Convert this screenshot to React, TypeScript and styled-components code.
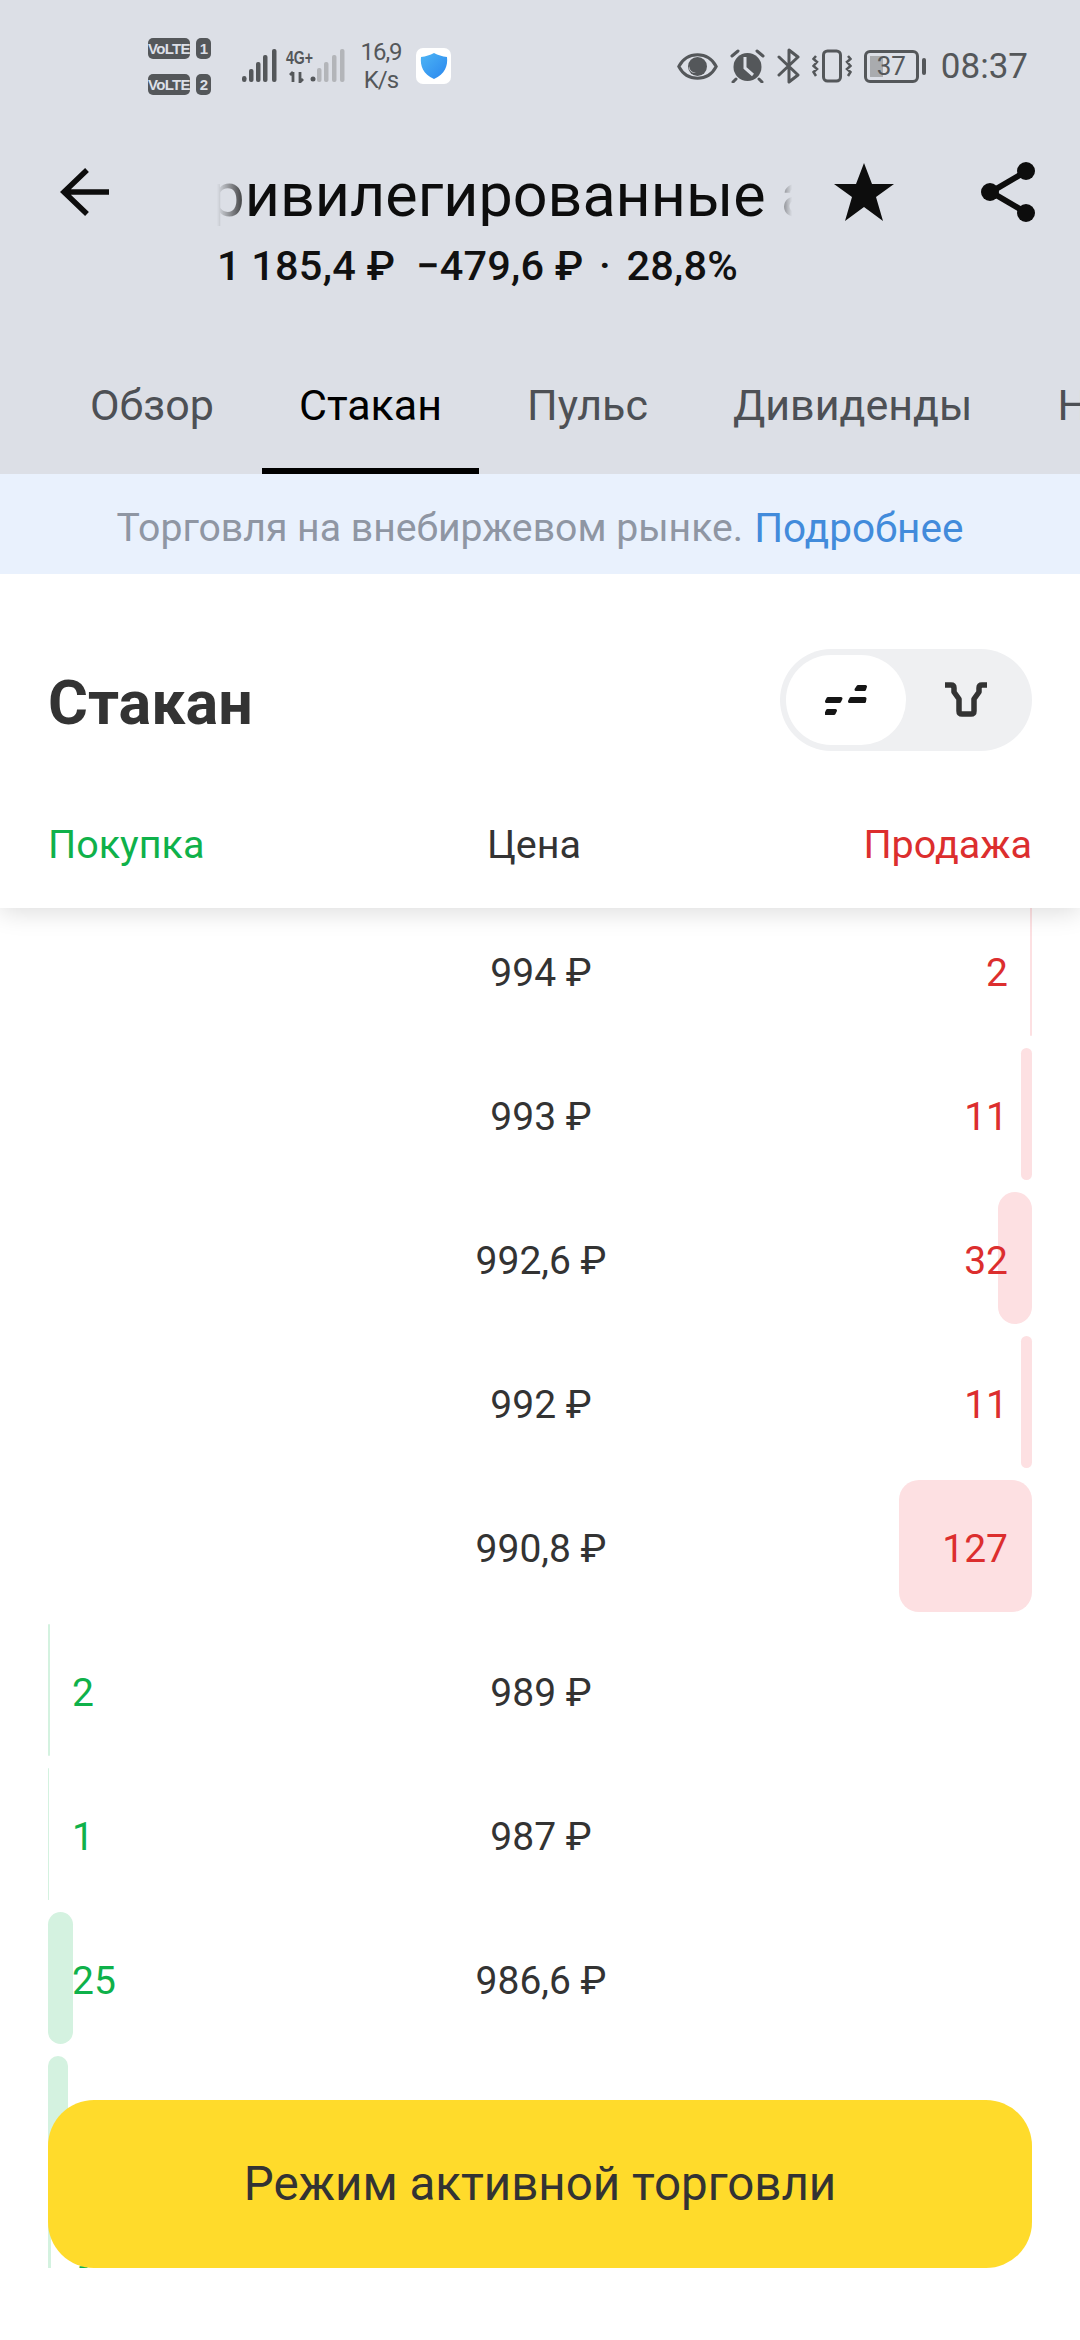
import React from 'react';
import styled, { createGlobalStyle } from 'styled-components';

const GlobalStyle = createGlobalStyle`
  html, body {
    margin: 0;
    padding: 0;
    background: #fff;
    font-family: Roboto, "Liberation Sans", sans-serif;
  }
  * { box-sizing: border-box; }
`;

const Screen = styled.div`
  position: relative;
  width: 1080px;
  height: 2340px;
  overflow: hidden;
  background: #fff;
  display: flex;
  flex-direction: column;
`;

const Top = styled.header`
  background: #dcdfe6;
  height: 474px;
  display: flex;
  flex-direction: column;
  flex-shrink: 0;
`;

const StatusBar = styled.div`
  height: 132px;
  padding: 0 52px 0 148px;
  display: flex;
  align-items: center;
  color: #54575a;
`;

const SimCol = styled.div`
  display: flex;
  flex-direction: column;
  gap: 15px;
  margin-right: 31px;
`;

const SimRow = styled.div`
  display: flex;
  gap: 6px;
`;

const Badge = styled.span<{ $w: number }>`
  width: ${p => p.$w}px;
  height: 21px;
  background: #54575a;
  color: #dcdfe6;
  border-radius: 5px;
  text-align: center;
  font: 700 15px/21px "Liberation Sans", sans-serif;
  letter-spacing: -0.7px;
  overflow: hidden;
`;

const Speed = styled.div`
  font-size: 24px;
  line-height: 28px;
  letter-spacing: -1px;
  text-align: center;
  margin: 0 13px 0 14px;
  width: 44px;
`;

const ShieldBox = styled.div`
  width: 35px;
  height: 36px;
  border-radius: 7px;
  background: #fff;
  display: flex;
  align-items: center;
  justify-content: center;
`;

const Spacer = styled.div`
  flex: 1;
`;

const StatusIcons = styled.div`
  display: flex;
  align-items: center;
  gap: 12px;
`;

const BatteryWrap = styled.div`
  display: flex;
  align-items: center;
  gap: 3px;
`;

const Battery = styled.div`
  position: relative;
  width: 55px;
  height: 33px;
  border: 3px solid #54575a;
  border-radius: 6px;
  font-size: 26px;
  line-height: 27px;
  text-align: center;
  &::before {
    content: '';
    position: absolute;
    left: 3px;
    top: 3px;
    bottom: 3px;
    width: 13px;
    background: #a9abae;
  }
`;

const BatteryDigits = styled.span`
  position: relative;
`;

const BatteryCap = styled.div`
  width: 4px;
  height: 17px;
  border-radius: 2px;
  background: #54575a;
`;

const Clock = styled.div`
  font-size: 35px;
  margin-left: 3px;
`;

const AppBar = styled.div`
  height: 132px;
  position: relative;
  display: flex;
  align-items: flex-start;
  padding: 0 32px 0 60px;
`;

const BackButton = styled.div`
  width: 49px;
  height: 48px;
  margin-top: 36px;
  flex-shrink: 0;
`;

const TitleBlock = styled.div`
  margin-left: 108px;
  width: 0;
  flex: 1;
  padding-top: 32px;
`;

const TitleClip = styled.div`
  width: 575px;
  height: 62px;
  overflow: hidden;
  white-space: nowrap;
  -webkit-mask-image: linear-gradient(90deg, transparent 0, #000 34px, #000 552px, transparent 575px);
  mask-image: linear-gradient(90deg, transparent 0, #000 34px, #000 552px, transparent 575px);
`;

const Title = styled.div`
  font-size: 61px;
  line-height: 62px;
  color: #0d0d0d;
  margin-left: -50px;
`;

const Quote = styled.div`
  font-size: 41.5px;
  font-weight: 500;
  line-height: 46px;
  letter-spacing: 0.2px;
  color: #111;
  margin-top: 17px;
  white-space: pre;
`;

const QuoteDot = styled.span`
  margin: 0 5px;
`;

const AppActions = styled.div`
  position: absolute;
  top: 30px;
  left: 834px;
  display: flex;
  gap: 87px;
  align-items: center;
`;

const Tabs = styled.nav`
  margin-top: auto;
  height: 104px;
  display: flex;
  gap: 11px;
  padding-left: 53px;
  overflow: hidden;
`;

const Tab = styled.div<{ $active?: boolean }>`
  flex-shrink: 0;
  height: 100%;
  padding: 0 37px;
  font-size: 43px;
  line-height: 70px;
  color: ${p => (p.$active ? '#000' : '#4d5055')};
  border-bottom: 6px solid ${p => (p.$active ? '#000' : 'transparent')};
`;

const Notice = styled.div`
  height: 100px;
  flex-shrink: 0;
  background: #e9f1fd;
  padding-top: 8px;
  display: flex;
  align-items: center;
  justify-content: center;
  font-size: 39.2px;
  color: #8f96a3;
  gap: 11px;
`;

const NoticeLink = styled.span`
  font-size: 40.5px;
  color: #428bdb;
`;

const Sticky = styled.div`
  position: relative;
  z-index: 1;
  height: 334px;
  flex-shrink: 0;
  padding: 0 48px;
  display: flex;
  flex-direction: column;
  background: #fff;
  box-shadow: 0 4px 24px rgba(0, 0, 0, 0.14);
  clip-path: inset(0 0 -60px 0);
`;

const Heading = styled.div`
  display: flex;
  align-items: center;
  justify-content: space-between;
  height: 102px;
  margin-top: 75px;
`;

const H1 = styled.h1`
  margin: 0;
  padding-top: 6px;
  font-size: 61px;
  font-weight: 700;
  color: #333;
`;

const Toggle = styled.div`
  width: 252px;
  height: 102px;
  border-radius: 51px;
  background: #eff0f2;
  padding: 6px;
  display: flex;
`;

const ToggleItem = styled.div<{ $on?: boolean }>`
  width: 120px;
  border-radius: 45px;
  background: ${p => (p.$on ? '#fff' : 'transparent')};
  display: flex;
  align-items: center;
  justify-content: center;
`;

const Columns = styled.div`
  display: grid;
  grid-template-columns: 1fr 1fr 1fr;
  margin-top: 72px;
  font-size: 39.5px;
  line-height: 44px;
`;

const ColHead = styled.div<{ $c: string; $a: string }>`
  color: ${p => p.$c};
  text-align: ${p => p.$a};
  padding-right: ${p => (p.$a === 'center' ? '12px' : '0')};
`;

const List = styled.div`
  height: 1364px;
  flex-shrink: 0;
  overflow: hidden;
  padding: 0 48px;
  display: flex;
  flex-direction: column;
  gap: 12px;
  margin-top: -4px;
`;

const Row = styled.div`
  position: relative;
  flex-shrink: 0;
  height: 132px;
  padding-top: 6px;
  display: grid;
  grid-template-columns: 1fr 1fr 1fr;
  align-items: center;
  font-size: 39px;
`;

const Fill = styled.div<{ $side: 'buy' | 'sell' }>`
  position: absolute;
  top: 0;
  bottom: 0;
  ${p => (p.$side === 'buy' ? 'left: 0;' : 'right: 0;')}
  border-radius: 20px;
  background: ${p => (p.$side === 'buy' ? '#d4f2e0' : '#fde0e2')};
`;

const Buy = styled.div`
  position: relative;
  color: #0fb14a;
  padding-left: 24px;
`;

const Price = styled.div`
  position: relative;
  color: #333;
  text-align: center;
  padding-left: 2px;
`;

const Sell = styled.div`
  position: relative;
  color: #dc2e2e;
  text-align: right;
  padding-right: 24px;
`;

const TradeButton = styled.button`
  position: absolute;
  left: 48px;
  top: 2100px;
  width: 984px;
  height: 168px;
  border: 0;
  border-radius: 46px;
  background: #ffdb2b;
  color: #333;
  font: 400 47.5px Roboto, "Liberation Sans", sans-serif;
`;

type Level = { price: string; buy?: string; sell?: string; width?: number };

const levels: Level[] = [
  { price: '994 ₽', sell: '2', width: 2 },
  { price: '993 ₽', sell: '11', width: 11 },
  { price: '992,6 ₽', sell: '32', width: 34 },
  { price: '992 ₽', sell: '11', width: 11 },
  { price: '990,8 ₽', sell: '127', width: 133 },
  { price: '989 ₽', buy: '2', width: 2 },
  { price: '987 ₽', buy: '1', width: 1 },
  { price: '986,6 ₽', buy: '25', width: 25 },
  { price: '986 ₽', buy: '20', width: 20 },
  { price: '985 ₽', buy: '3', width: 3 },
];

const tabs = [
  { label: 'Обзор', active: false },
  { label: 'Стакан', active: true },
  { label: 'Пульс', active: false },
  { label: 'Дивиденды', active: false },
  { label: 'Новости', active: false },
];

const ICON = '#54575a';
const BG = '#dcdfe6';

const NetworkIcons = () => (
  <svg width="103" height="34" viewBox="0 0 103 34">
    <g fill={ICON}>
      <rect x="0" y="27" width="4.500" height="6" rx="2.200" />
      <rect x="7" y="20" width="4.500" height="13" rx="2" />
      <rect x="14" y="13" width="4.500" height="20" rx="2" />
      <rect x="21" y="6" width="4.500" height="27" rx="2" />
      <rect x="30" y="0" width="4.500" height="33" rx="2" />
      <circle cx="71" cy="30" r="2.500" />
    </g>
    <text x="44" y="15" fontSize="18" fontWeight="700" fill={ICON} fontFamily="Liberation Sans" textLength="27" lengthAdjust="spacingAndGlyphs">4G+</text>
    <path d="M51 23v10M48 26l3-3M58 23v10l3-3" stroke={ICON} strokeWidth="2.800" fill="none" />
    <g fill="#b3b5b9">
      <rect x="75" y="19" width="4.500" height="14" rx="2" />
      <rect x="82" y="13" width="4.500" height="20" rx="2" />
      <rect x="90" y="6" width="4.500" height="27" rx="2" />
      <rect x="98" y="0" width="4.500" height="33" rx="2" />
    </g>
  </svg>
);

export default function App() {
  return (
    <Screen>
      <GlobalStyle />
      <Top>
        <StatusBar>
          <SimCol>
            <SimRow><Badge $w={42}>VoLTE</Badge><Badge $w={15}>1</Badge></SimRow>
            <SimRow><Badge $w={42}>VoLTE</Badge><Badge $w={15}>2</Badge></SimRow>
          </SimCol>
          <NetworkIcons />
          <Speed>16,9<br />K/s</Speed>
          <ShieldBox>
            <svg width="30" height="28" viewBox="0 0 30 28">
              <defs>
                <linearGradient id="shield" x1="0" y1="0" x2="1" y2="1">
                  <stop offset="0" stopColor="#4db5f5" />
                  <stop offset="1" stopColor="#2a86ee" />
                </linearGradient>
              </defs>
              <path d="M15 1c4 2 8 3.500 13 4 1 9-2 17-13 22C4 22 1 14 2 5c5-.5 9-2 13-4z" fill="url(#shield)" />
            </svg>
          </ShieldBox>
          <Spacer />
          <StatusIcons>
            <svg width="41" height="27" viewBox="0 0 41 27">
              <path d="M1.800 13.500C6 5.500 13 1.800 20.500 1.800S35 5.500 39.200 13.500C35 21.500 28 25.200 20.500 25.200S6 21.500 1.800 13.500z" fill="none" stroke={ICON} strokeWidth="3" />
              <circle cx="20.500" cy="13.500" r="9.500" fill={ICON} />
              <path d="M12 13a6 6 0 0 0 7 7 8 8 0 0 1-7-7z" fill={BG} />
            </svg>
            <svg width="35" height="34" viewBox="0 0 35 34">
              <circle cx="17.500" cy="18" r="14" fill={ICON} />
              <path d="M15 8v11l8 7" stroke={BG} strokeWidth="3" fill="none" />
              <path d="M2 7l6-5M33 7l-6-5M6 30l-3 3M29 30l3 3" stroke={ICON} strokeWidth="3" fill="none" strokeLinecap="round" />
            </svg>
            <svg width="23" height="36" viewBox="0 0 23 36">
              <path d="M2 9l19 18-9 7V2l9 7L2 27" stroke={ICON} strokeWidth="3" fill="none" strokeLinejoin="round" strokeLinecap="round" />
            </svg>
            <svg width="40" height="34" viewBox="0 0 40 34">
              <rect x="11.500" y="2" width="17" height="30" rx="4" fill="none" stroke={ICON} strokeWidth="3" />
              <path d="M4 7L1.500 10 5 13l-3.500 4L5 20l-3.500 3L4 27M36 7l2.500 3L35 13l3.500 4L35 20l3.500 3L36 27" fill="none" stroke={ICON} strokeWidth="2.500" />
            </svg>
            <BatteryWrap>
              <Battery><BatteryDigits>37</BatteryDigits></Battery>
              <BatteryCap />
            </BatteryWrap>
            <Clock>08:37</Clock>
          </StatusIcons>
        </StatusBar>
        <AppBar>
          <BackButton>
            <svg width="49" height="48" viewBox="0 0 49 48">
              <path d="M27 2L4 24l23 22M4 24h45" fill="none" stroke="#0d0d0d" strokeWidth="5.500" />
            </svg>
          </BackButton>
          <TitleBlock>
            <TitleClip><Title>Привилегированные акции</Title></TitleClip>
            <Quote>1 185,4 ₽  −479,6 ₽ <QuoteDot>·</QuoteDot> 28,8%</Quote>
          </TitleBlock>
          <AppActions>
            <svg width="60" height="58" viewBox="0 0 60 58">
              <path d="M30 0l8 21h22L42 34l7 24-19-14-19 14 7-24L0 21h22z" fill="#0d0d0d" />
            </svg>
            <svg width="54" height="60" viewBox="0 0 54 60">
              <path d="M44 10L10 30l34 20" fill="none" stroke="#0d0d0d" strokeWidth="6" />
              <circle cx="45" cy="9" r="9" fill="#0d0d0d" />
              <circle cx="9" cy="30" r="9" fill="#0d0d0d" />
              <circle cx="45" cy="51" r="9" fill="#0d0d0d" />
            </svg>
          </AppActions>
        </AppBar>
        <Tabs>
          {tabs.map(t => (
            <Tab key={t.label} $active={t.active}>{t.label}</Tab>
          ))}
        </Tabs>
      </Top>
      <Notice>
        <span>Торговля на внебиржевом рынке.</span>
        <NoticeLink>Подробнее</NoticeLink>
      </Notice>
      <Sticky>
        <Heading>
          <H1>Стакан</H1>
          <Toggle>
            <ToggleItem $on>
              <svg width="42" height="30" viewBox="0 0 42 30">
                <path d="M3 13.500h13l-1.500 3H1.500zM2.500 25.500h8l-1.500 3H1zM26 13.500h14l-.5 3H24.500zM33 1.500h7.500l-1 3H31z" fill="#151515" stroke="#151515" strokeWidth="3" strokeLinejoin="round" />
              </svg>
            </ToggleItem>
            <ToggleItem>
              <svg width="42" height="37" viewBox="0 0 42 37">
                <path d="M0 3h6q3 0 3 3v4l5 7v12q0 3 3 3h9q3 0 3-3V17l5-7V6q0-3 3-3h5" fill="none" stroke="#333" strokeWidth="5.500" strokeLinejoin="round" />
              </svg>
            </ToggleItem>
          </Toggle>
        </Heading>
        <Columns>
          <ColHead $c="#0fb14a" $a="left">Покупка</ColHead>
          <ColHead $c="#333" $a="center">Цена</ColHead>
          <ColHead $c="#dc2e2e" $a="right">Продажа</ColHead>
        </Columns>
      </Sticky>
      <List>
        {levels.map(l => (
          <Row key={l.price}>
            {l.buy && <Fill $side="buy" style={{ width: l.width }} />}
            {l.sell && <Fill $side="sell" style={{ width: l.width }} />}
            <Buy>{l.buy}</Buy>
            <Price>{l.price}</Price>
            <Sell>{l.sell}</Sell>
          </Row>
        ))}
      </List>
      <TradeButton>Режим активной торговли</TradeButton>
    </Screen>
  );
}
